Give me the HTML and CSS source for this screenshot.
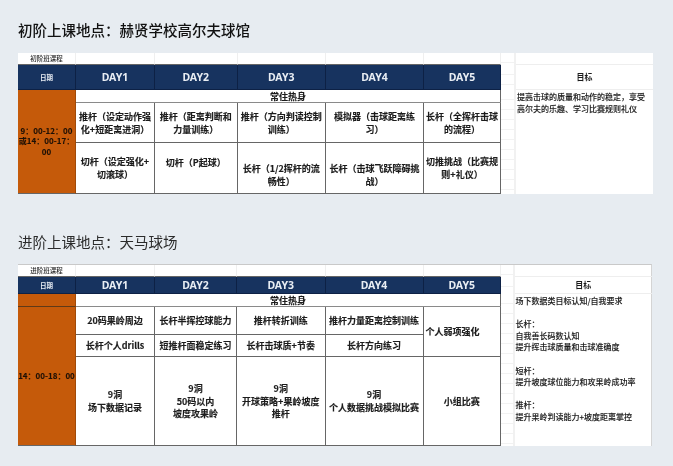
FILE: index.html
```html
<!DOCTYPE html>
<html lang="zh-CN">
<head>
<meta charset="utf-8">
<title>课程安排</title>
<link rel="stylesheet" href="styles.css">
</head>
<body>
<main class="page">
  <section class="course">
    <h2 class="course-title">初阶上课地点：赫贤学校高尔夫球馆</h2>
    <div class="sheet sheet-basic">
      <div class="cell name">初阶班课程</div>
      <div class="cell blank"></div><div class="cell blank"></div><div class="cell blank"></div><div class="cell blank"></div><div class="cell blank"></div>
      <div class="cell gap"></div><div class="cell blank last"></div>

      <div class="cell head small">日期</div>
      <div class="cell head">DAY1</div><div class="cell head">DAY2</div><div class="cell head">DAY3</div><div class="cell head">DAY4</div><div class="cell head">DAY5</div>
      <div class="cell gap"></div><div class="cell goal-head">目标</div>

      <div class="cell date rows-3">9：00-12：00<br>或14：00-17：<br>00</div>
      <div class="cell warm cols-5">常住热身</div>
      <div class="cell gap rows-3"></div>
      <div class="cell goal rows-3">提高击球的质量和动作的稳定，享受<br>高尔夫的乐趣、学习比赛规则礼仪</div>

      <div class="cell">推杆（设定动作强<br>化+短距离进洞）</div>
      <div class="cell">推杆（距离判断和<br>力量训练）</div>
      <div class="cell">推杆（方向判读控制<br>训练）</div>
      <div class="cell">模拟器（击球距离练<br>习）</div>
      <div class="cell">长杆（全挥杆击球<br>的流程）</div>

      <div class="cell">切杆（设定强化+<br>切滚球）</div>
      <div class="cell raised">切杆（P起球）</div>
      <div class="cell lowered">长杆（1/2挥杆的流<br>畅性）</div>
      <div class="cell lowered">长杆（击球飞跃障碍挑<br>战）</div>
      <div class="cell">切推挑战（比赛规<br>则+礼仪）</div>
    </div>
  </section>

  <section class="course">
    <h2 class="course-title light">进阶上课地点：天马球场</h2>
    <div class="sheet sheet-advanced">
      <div class="cell name">进阶班课程</div>
      <div class="cell blank"></div><div class="cell blank"></div><div class="cell blank"></div><div class="cell blank"></div><div class="cell blank"></div>
      <div class="cell gap"></div><div class="cell blank last"></div>

      <div class="cell head small">日期</div>
      <div class="cell head">DAY1</div><div class="cell head">DAY2</div><div class="cell head">DAY3</div><div class="cell head">DAY4</div><div class="cell head">DAY5</div>
      <div class="cell gap"></div><div class="cell goal-head">目标</div>

      <div class="cell date date-top"></div>
      <div class="cell warm cols-5">常住热身</div>
      <div class="cell gap rows-4"></div>
      <div class="cell goal rows-4">场下数据类目标认知/自我要求<br><br>长杆：<br>自我善长码数认知<br>提升挥击球质量和击球准确度<br><br>短杆：<br>提升坡度球位能力和攻果岭成功率<br><br>推杆：<br>提升果岭判读能力+坡度距离掌控</div>

      <div class="cell date rows-3">14：00-18：00</div>
      <div class="cell">20码果岭周边</div>
      <div class="cell">长杆半挥控球能力</div>
      <div class="cell">推杆转折训练</div>
      <div class="cell">推杆力量距离控制训练</div>
      <div class="cell rows-2 flush-left">个人弱项强化</div>

      <div class="cell">长杆个人drills</div>
      <div class="cell">短推杆面稳定练习</div>
      <div class="cell">长杆击球质+节奏</div>
      <div class="cell">长杆方向练习</div>

      <div class="cell">9洞<br>场下数据记录</div>
      <div class="cell">9洞<br>50码以内<br>坡度攻果岭</div>
      <div class="cell">9洞<br>开球策略+果岭坡度<br>推杆</div>
      <div class="cell">9洞<br>个人数据挑战模拟比赛</div>
      <div class="cell">小组比赛</div>
    </div>
  </section>
</main>
</body>
</html>
```

FILE: styles.css
```css
* {
  box-sizing: border-box;
}

html,
body {
  margin: 0;
  height: 100%;
  overflow: hidden;
}

body {
  background: #e7ecf1;
  color: #1f1f1f;
  font-family: "Noto Sans CJK SC", "Noto Sans", sans-serif;
}

.page {
  display: flex;
  flex-direction: column;
  gap: 38px;
  padding: 20px 20px 0 18px;
}

.course-title {
  margin: 0 0 13px;
  font-size: 14.5px;
  line-height: 20px;
  font-weight: 500;
  color: #111;
  filter: blur(0.25px);
}

.course-title.light {
  margin-bottom: 12px;
  font-weight: 400;
  color: #2b2b2b;
}

.sheet {
  display: grid;
  background: #fff;
  filter: blur(0.4px);
}

.sheet-basic {
  width: 635px;
  grid-template-columns: 58px 79px 82.5px 88.5px 98px 77px 15px 137px;
  grid-template-rows: 12px 25px 13px 40px 51px;
}

.sheet-advanced {
  width: 634px;
  grid-template-columns: 58px 79px 82px 88.5px 98px 77.5px 13.5px 137.5px;
  grid-template-rows: 12px 17px 12.5px 28.5px 22px 89px;
  border-top: 1px solid #c9c9c9;
  border-right: 1px solid #d4d4d4;
}

.cell {
  display: flex;
  align-items: center;
  justify-content: center;
  min-width: 0;
  padding-top: 2px;
  text-align: center;
  white-space: nowrap;
  font-size: 9px;
  line-height: 12.7px;
  font-weight: 700;
  color: #1c1c1c;
  -webkit-text-stroke: 0.15px #1c1c1c;
  border-right: 1px solid #666;
  border-bottom: 1px solid #666;
}

.cols-5 {
  grid-column: span 5;
}

.rows-2 {
  grid-row: span 2;
}

.rows-3 {
  grid-row: span 3;
}

.rows-4 {
  grid-row: span 4;
}

.name {
  padding-top: 0;
  font-size: 6.5px;
  font-weight: 500;
  -webkit-text-stroke: 0;
  border-right: 1px solid #efefef;
  border-bottom: 1px solid #666;
}

.blank {
  border-right: 1px solid #efefef;
  border-bottom: 1px solid #666;
}

.blank.last {
  border-right: 0;
  border-bottom: 1px solid #eee;
}

.head {
  padding-top: 0;
  background: #17335f;
  color: #e8edf3;
  font-family: "Noto Sans", sans-serif;
  font-size: 10.5px;
  -webkit-text-stroke: 0;
  border-right: 1px solid #0d2145;
  border-bottom: 1px solid #0d2145;
}

.head.small {
  font-size: 6.5px;
  font-family: "Noto Sans CJK SC", sans-serif;
}

.date {
  padding-top: 0;
  background: #c55a0a;
  color: #1d1006;
  font-family: "Noto Sans CJK SC", sans-serif;
  font-size: 8px;
  line-height: 10.2px;
  -webkit-text-stroke: 0.1px #1d1006;
  border-right: 1px solid #a04a08;
  border-bottom: 1px solid #666;
}

.date-top {
  border-bottom: 1px solid #5f3a18;
}

.warm {
  padding-top: 3px;
  border-bottom: 1px solid #8a8a8a;
}

.gap {
  padding-top: 0;
  background: repeating-linear-gradient(#fff 0 9px, #f2f2f2 9px 10px);
  border-right: 2px solid #f1f1f1;
  border-bottom: 0;
}

.goal-head {
  padding-top: 0;
  font-size: 8px;
  font-weight: 700;
  -webkit-text-stroke: 0;
  border-right: 0;
  border-bottom: 1px solid #eee;
}

.goal {
  display: block;
  padding: 1px 0 0 1px;
  text-align: left;
  font-size: 8px;
  line-height: 11.6px;
  font-weight: 500;
  -webkit-text-stroke: 0.1px #1c1c1c;
  border-right: 0;
  border-bottom: 0;
}

.raised {
  padding-bottom: 11px;
}

.lowered {
  padding-top: 15px;
}

.flush-left {
  justify-content: flex-start;
  padding-left: 2px;
}
```
